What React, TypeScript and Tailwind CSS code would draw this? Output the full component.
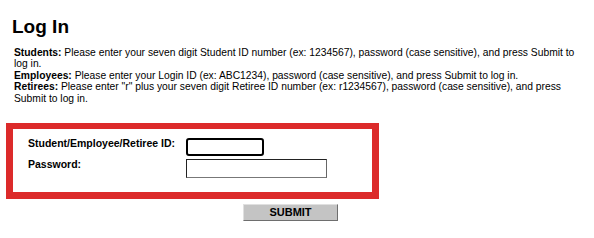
import React from 'react';

const App = () => {
    return (
        <div className="w-[594px] h-[238px] bg-white text-black font-['Liberation_Sans',Arial,sans-serif] overflow-hidden">
            {/* Heading */}
            <h1 className="pl-[12px] pt-[16px] text-[19px] leading-[22px] font-bold">Log In</h1>

            {/* Instructions */}
            <div className="ml-[14px] mt-[9px] w-[562px] text-[10.3px] leading-[11.4px]">
                <p>
                    <b>Students:</b> Please enter your seven digit Student ID number (ex: 1234567), password (case sensitive), and press Submit to log in.
                </p>
                <p>
                    <b>Employees:</b> Please enter your Login ID (ex: ABC1234), password (case sensitive), and press Submit to log in.
                </p>
                <p>
                    <b>Retirees:</b> Please enter "r" plus your seven digit Retiree ID number (ex: r1234567), password (case sensitive), and press Submit to log in.
                </p>
            </div>

            {/* Login box */}
            <div className="ml-[6px] mt-[19px] w-[373px] h-[76px] border-[7px] border-t-[6px] border-[#dc2a2a] pl-[15px] pt-[9px]">
                <div className="grid grid-cols-[158px_auto] gap-y-[3px] items-start text-[10.5px] leading-[10px] font-bold">
                    <label>Student/Employee/Retiree ID:</label>
                    <input type="text" className="w-[78px] h-[18px] border-2 border-black rounded-[3px] outline-none" />
                    <label>Password:</label>
                    <input type="password" className="w-[141px] h-[19px] border-[1.5px] border-[#222] border-b-[#777] border-r-[#666] outline-none" />
                </div>
            </div>

            {/* Submit */}
            <div className="flex pl-[243px] mt-[5px]">
                <button className="w-[95px] h-[17px] bg-[#c4c4c4] border border-[#e0e0e0] border-b-[#6e6e6e] border-r-[#6e6e6e] text-[11px] font-bold leading-none">
                    SUBMIT
                </button>
            </div>
        </div>
    );
};

export default App;
